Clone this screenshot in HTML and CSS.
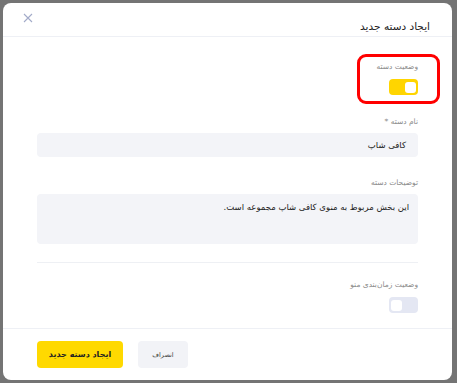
FILE: index.html
```html
<!DOCTYPE html>
<html lang="fa">
<head>
  <meta charset="utf-8">
  <title>ایجاد دسته جدید</title>
  <link rel="stylesheet" href="styles.css">
</head>
<body>
  <div class="modal" dir="rtl">
    <div class="modal-header">
      <h2 class="modal-title">ایجاد دسته جدید</h2>
      <button class="close-button" aria-label="بستن">
        <svg width="10" height="10" viewBox="0 0 10 10">
          <path d="M1 1L9 9M9 1L1 9" stroke="#a3abc9" stroke-width="1.1" fill="none"/>
        </svg>
      </button>
    </div>

    <div class="modal-body">
      <div class="field status-field">
        <div class="highlight"></div>
        <label class="label">وضعیت دسته</label>
        <div class="toggle on"><span class="knob"></span></div>
      </div>

      <div class="field name-field">
        <label class="label">نام دسته *</label>
        <div class="input">کافی شاپ</div>
      </div>

      <div class="field desc-field">
        <label class="label">توضیحات دسته</label>
        <div class="input textarea">این بخش مربوط به منوی کافی شاپ مجموعه است.</div>
      </div>

      <hr class="divider">

      <div class="field schedule-field">
        <label class="label">وضعیت زمان‌بندی منو</label>
        <div class="toggle"><span class="knob"></span></div>
      </div>
    </div>

    <div class="modal-footer">
      <button class="button cancel">انصراف</button>
      <button class="button primary">ایجاد دسته جدید</button>
    </div>
  </div>
</body>
</html>
```

FILE: styles.css
```css
html, body {
  margin: 0;
  height: 100%;
}
body {
  font-family: "DejaVu Sans", sans-serif;
  background-color: #747474;
  padding: 3px 5px 3px 3px;
  box-sizing: border-box;
}
.modal {
  width: 449px;
  height: 377px;
  background-color: white;
  border-radius: 8px;
  display: flex;
  flex-direction: column;
  overflow: hidden;
}
.modal-header {
  height: 33px;
  display: flex;
  align-items: center;
  justify-content: space-between;
  padding: 0 22px 0 20px;
  border-bottom: 1px solid #eef0f5;
}
.modal-title {
  margin: 0;
  font-size: 10.5px;
  font-weight: normal;
  color: #222;
  padding-top: 13px;
}
.close-button {
  background: none;
  border: none;
  padding: 0;
  width: 10px;
  height: 10px;
  margin-bottom: 3px;
  cursor: pointer;
  display: flex;
}
.modal-body {
  flex: 1;
  padding: 24px 34px 0 34px;
}
.field {
  display: flex;
  flex-direction: column;
  align-items: flex-start;
}
.status-field {
  position: relative;
}
.highlight {
  position: absolute;
  top: -7px;
  right: -22px;
  width: 77px;
  height: 44px;
  border: 3px solid #f00;
  border-radius: 9px;
}
.label {
  font-size: 7.5px;
  line-height: 12px;
  color: #8a8a8a;
  margin-bottom: 5px;
}
.status-field .label,
.schedule-field .label {
  margin-bottom: 6px;
}
.name-field {
  margin-top: 21px;
}
.desc-field {
  margin-top: 20px;
}
.input {
  align-self: stretch;
  box-sizing: border-box;
  height: 24px;
  background-color: #f3f4f8;
  border-radius: 4px;
  padding: 0 12px;
  font-size: 8.5px;
  line-height: 24px;
  color: #222;
}
.textarea {
  height: 50px;
  padding: 6px 9px;
  line-height: 14px;
}
.divider {
  border: none;
  border-top: 1px solid #eef0f4;
  margin: 18px 0 0 0;
}
.schedule-field {
  margin-top: 16px;
}
.toggle {
  width: 29px;
  height: 16px;
  border-radius: 4px;
  background-color: #e4e7f3;
  display: flex;
  align-items: center;
  justify-content: flex-end;
  padding: 0 2px;
  box-sizing: border-box;
}
.toggle.on {
  background-color: #ffd500;
  justify-content: flex-start;
}
.knob {
  width: 11px;
  height: 11px;
  background-color: white;
  border-radius: 3px;
}
.modal-footer {
  border-top: 1px solid #eef0f5;
  padding: 12px 34px;
  display: flex;
  justify-content: flex-end;
  gap: 15px;
}
.button {
  height: 27px;
  border: none;
  border-radius: 4px;
  font-family: "DejaVu Sans", sans-serif;
  cursor: pointer;
  padding: 0;
}
.cancel {
  width: 50px;
  background-color: #f2f3f7;
  color: #444;
  font-size: 6.5px;
}
.primary {
  width: 86px;
  background-color: #ffd900;
  color: #222;
  font-size: 8px;
  font-weight: bold;
}
```
